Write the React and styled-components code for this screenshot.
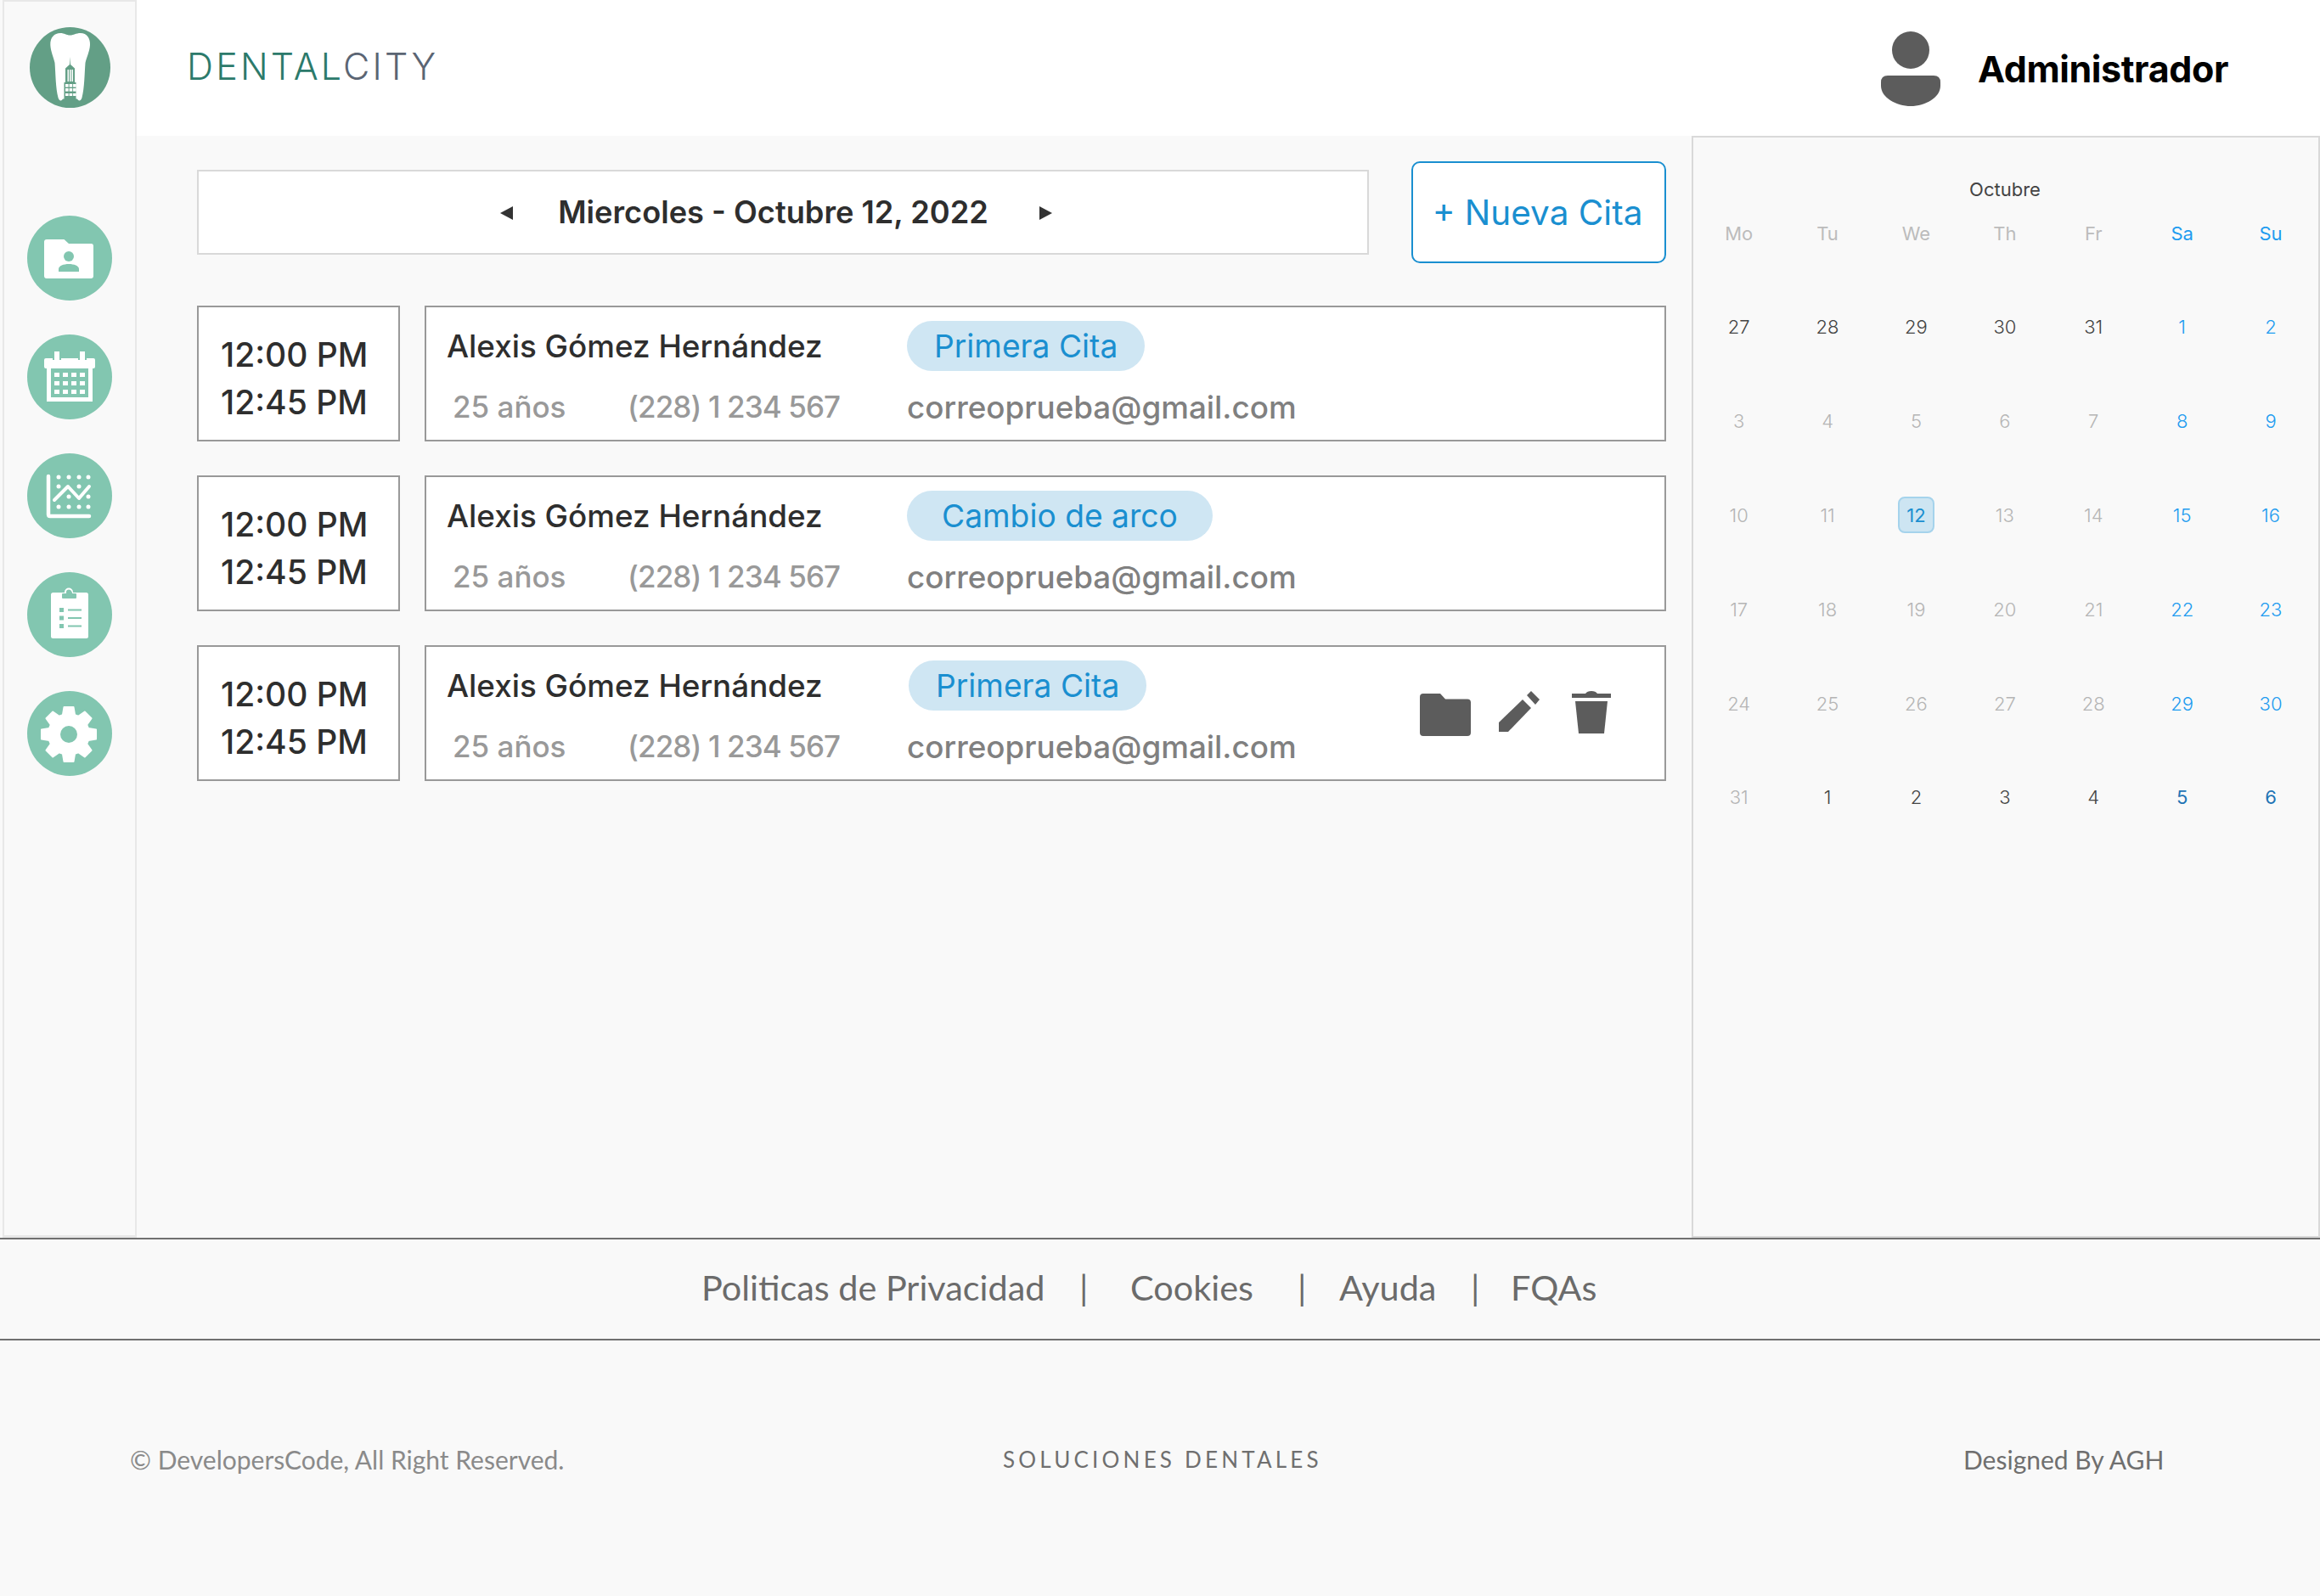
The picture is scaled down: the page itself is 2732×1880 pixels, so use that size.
import React from "react";
import styled, { createGlobalStyle } from "styled-components";

const Global = createGlobalStyle`
  html, body { margin: 0; padding: 0; background: #f9f9f9; }
  * { box-sizing: border-box; }
  #root { width: 2732px; height: 1880px; overflow: hidden; font-family: Inter, "Liberation Sans", sans-serif; }
`;

const Shell = styled.div`
  display: flex;
  height: 1458px;
  padding-left: 3px;
`;
const Sidebar = styled.aside`
  flex: 0 0 158px;
  display: flex;
  flex-direction: column;
  align-items: center;
  padding-top: 30px;
  background: #f9f9f9;
  border: 2px solid #e8e8e8;
  border-bottom-width: 3px;
`;
const LogoMark = styled.svg`
  width: 95px;
  height: 95px;
  display: block;
  margin-bottom: 127px;
`;
const NavList = styled.nav`
  display: flex;
  flex-direction: column;
  gap: 40px;
`;
const NavCircle = styled.svg`
  width: 100px;
  height: 100px;
  display: block;
`;
const Main = styled.div`
  flex: 1;
  display: flex;
  flex-direction: column;
  min-width: 0;
`;
const Header = styled.header`
  height: 160px;
  background: #fff;
  display: flex;
  align-items: center;
  justify-content: space-between;
  padding: 0 108px 4px 59px;
`;
const Brand = styled.div`
  font-weight: 300;
  font-size: 43px;
  letter-spacing: 3.2px;
  color: #2c7a6b;
  span { color: #5b6573; }
`;
const UserBox = styled.div`
  display: flex;
  align-items: center;
  gap: 44px;
  margin-top: 6px;
`;
const UserName = styled.div`
  font-weight: 700;
  font-size: 43px;
  color: #000;
  letter-spacing: -0.4px;
`;
const Content = styled.div`
  flex: 1;
  display: flex;
  min-height: 0;
`;
const Agenda = styled.section`
  flex: 1;
  padding: 30px 30px 0 71px;
  display: flex;
  flex-direction: column;
`;
const Toolbar = styled.div`
  display: flex;
  align-items: center;
  gap: 50px;
  height: 120px;
  margin-bottom: 50px;
`;
const DateBox = styled.div`
  flex: 1;
  height: 100px;
  background: #fff;
  border: 2px solid #d9d9d9;
  display: flex;
  align-items: center;
  justify-content: center;
  padding: 2px 16px 0 0;
`;
const Arrow = styled.i`
  width: 0;
  height: 0;
  border-top: 8px solid transparent;
  border-bottom: 8px solid transparent;
  ${p => (p.$right ? "border-left: 15px solid #333;" : "border-right: 15px solid #333;")}
`;
const DateText = styled.div`
  margin: -2px 60px 0 53px;
  font-size: 36.2px;
  font-weight: 600;
  color: #2e2e2e;
`;
const NewButton = styled.button`
  flex: 0 0 300px;
  height: 120px;
  background: #fff;
  border: 2px solid #1a8fd0;
  border-radius: 10px;
  color: #1a8fd0;
  font: 400 40.5px Inter, sans-serif;
  padding: 0 3px 0 0;
`;
const Rows = styled.div`
  display: flex;
  flex-direction: column;
  gap: 40px;
`;
const Row = styled.article`
  display: flex;
  gap: 29px;
  height: 160px;
`;
const TimeBox = styled.div`
  flex: 0 0 239px;
  background: #fff;
  border: 2px solid #999;
  padding: 28px 0 0 26px;
  font-size: 39px;
  font-weight: 500;
  line-height: 56px;
  color: #2e2e2e;
`;
const Card = styled.div`
  flex: 1;
  background: #fff;
  border: 2px solid #999;
  display: flex;
  align-items: center;
  padding-left: 24px;
`;
const CardGrid = styled.div`
  display: grid;
  grid-template-columns: 542px auto;
  grid-template-rows: 59px 42px;
  row-gap: 21px;
  align-items: center;
  margin-bottom: 2px;
`;
const Name = styled.div`
  font-size: 36.8px;
  font-weight: 500;
  color: #2e2e2e;
`;
const Chip = styled.div`
  justify-self: start;
  height: 59px;
  padding: 0 ${p => p.$pad}px;
  margin-left: ${p => p.$shift}px;
  border-radius: 30px;
  background: #cfe6f3;
  color: #1a8fd0;
  font-size: 37.2px;
  line-height: 59px;
`;
const Meta = styled.div`
  display: flex;
  padding-left: 7px;
  font-size: 35px;
  font-weight: 500;
  color: #999;
`;
const Age = styled.span`
  width: 206px;
`;
const Phone = styled.span`
  letter-spacing: -0.9px;
`;
const Email = styled.div`
  font-size: 36.8px;
  font-weight: 500;
  color: #808080;
`;
const Actions = styled.div`
  margin-left: auto;
  display: flex;
  align-items: flex-start;
  gap: 33px;
  margin-right: 63px;
`;
const ActionIcon = styled.svg`
  display: block;
  fill: #5c5c5c;
  margin: ${p => p.$margin || 0};
`;
const Calendar = styled.aside`
  flex: 0 0 740px;
  background: #f9f9f9;
  border: 2px solid #d9d9d9;
  padding: 35px 0 0 1.5px;
`;
const MonthTitle = styled.div`
  width: 731px;
  height: 52px;
  line-height: 52px;
  text-align: center;
  font-size: 22px;
  color: #444;
`;
const WeekHeader = styled.div`
  display: grid;
  grid-template-columns: repeat(7, 104.4px);
  height: 52px;
  line-height: 52px;
  text-align: center;
  font-size: 22px;
  margin-bottom: 29px;
`;
const WeekDay = styled.div`
  color: ${p => (p.$weekend ? "#1e9cf0" : "#bcbcbc")};
`;
const DaysGrid = styled.div`
  display: grid;
  grid-template-columns: repeat(7, 104.4px);
  grid-auto-rows: 110.8px;
  font-size: 22px;
`;
const Day = styled.div`
  display: flex;
  align-items: center;
  justify-content: center;
  font-weight: ${p => (p.$tone === "navy" ? 400 : 300)};
  color: ${p => ({ dim: "#b5b5b5", dark: "#444", blue: "#1e9cf0", navy: "#1f74b5" }[p.$tone])};
`;
const Today = styled.span`
  width: 43px;
  height: 43px;
  border-radius: 8px;
  background: #cde5f2;
  border: 2px solid #a5d3ec;
  color: #1a8fd0;
  display: flex;
  align-items: center;
  justify-content: center;
  font-weight: 400;
`;
const FooterNav = styled.nav`
  height: 121px;
  border-top: 2px solid #707070;
  border-bottom: 2px solid #707070;
  display: flex;
  align-items: center;
  padding: 0 0 6px 826px;
  font-family: Lato, sans-serif;
  font-size: 41.4px;
  color: #6b6b6b;
`;
const FooterLink = styled.span`
  width: ${p => p.$w}px;
  white-space: nowrap;
`;
const FooterBottom = styled.footer`
  display: grid;
  grid-template-columns: 1028px 1131px auto;
  padding: 116px 0 0 153px;
  align-items: center;
  height: 301px;
  align-content: start;
`;
const Copy = styled.div`
  font-family: Lato, sans-serif;
  font-size: 30px;
  color: #8a8a8a;
  line-height: 48px;
`;
const Slogan = styled.div`
  font-family: Lato, sans-serif;
  font-size: 26px;
  letter-spacing: 4.2px;
  color: #6f6f6f;
  line-height: 46px;
`;
const Credit = styled.div`
  font-family: Lato, sans-serif;
  font-size: 30px;
  color: #6f6f6f;
  line-height: 48px;
`;

const gearPath = (() => {
  const cx = 49, cy = 51, R = 32.5, r = 24;
  const pts = [];
  for (let i = 0; i < 8; i++) {
    const a = (i * Math.PI) / 4 - Math.PI / 2;
    const at = (rad, d) => `${(cx + rad * Math.cos(a + d)).toFixed(2)} ${(cy + rad * Math.sin(a + d)).toFixed(2)}`;
    pts.push(at(r, -0.3), at(R, -0.17), at(R, 0.17), at(r, 0.3));
  }
  return `M${pts.join("L")}Z`;
})();

const Disc = () => <circle cx="50" cy="50" r="50" fill="#82c6b0" />;

const FolderPersonIcon = () => (
  <NavCircle viewBox="0 0 100 100">
    <Disc />
    <path fill="#fff" d="M23 28H43.5L49 33H75.5Q78 33 78 36V71Q78 74 75 74H23Q20 74 20 71V31Q20 28 23 28Z" />
    <circle cx="49" cy="48" r="6" fill="#82c6b0" />
    <path fill="#82c6b0" d="M37 66V63C37 59 43 57 49 57S61 59 61 63V66Z" />
  </NavCircle>
);
const CalendarIcon = () => (
  <NavCircle viewBox="0 0 100 100">
    <Disc />
    <path fill="#fff" d="M22 28H78Q80 28 80 30V38Q80 40 78 40H77V79H23V40H22Q20 40 20 38V30Q20 28 22 28Z" />
    <rect x="28" y="40" width="44" height="34" fill="#82c6b0" />
    <rect x="30" y="20" width="10" height="10" fill="#82c6b0" />
    <rect x="60" y="20" width="10" height="10" fill="#82c6b0" />
    <rect x="32" y="20" width="6" height="10" fill="#fff" />
    <rect x="62" y="20" width="6" height="10" fill="#fff" />
    {[45, 55, 65].map(y => [32, 42, 52, 62].map(x => <rect key={`${x}-${y}`} x={x} y={y} width="6" height="5" fill="#fff" />))}
  </NavCircle>
);
const ChartIcon = () => (
  <NavCircle viewBox="0 0 100 100">
    <Disc />
    <path fill="none" stroke="#fff" strokeWidth="4.5" strokeLinecap="round" strokeLinejoin="round" d="M25 27V72Q25 74 27 74H73" />
    <path fill="none" stroke="#fff" strokeWidth="4" strokeLinecap="round" strokeLinejoin="round" d="M32 55L48 39L61 53L73 39" />
    {[[37, 28], [49, 28], [61, 28], [72, 28], [37, 39], [61, 39], [49, 51], [72, 51], [37, 63], [49, 63], [61, 63], [72, 63]].map(([x, y]) => (
      <circle key={`${x}-${y}`} cx={x} cy={y} r="2.5" fill="#fff" />
    ))}
  </NavCircle>
);
const ClipboardIcon = () => (
  <NavCircle viewBox="0 0 100 100">
    <Disc />
    <rect x="28" y="24" width="44" height="54" rx="2.5" fill="#fff" />
    <circle cx="49" cy="23.5" r="4" fill="none" stroke="#fff" strokeWidth="2" />
    <rect x="41" y="25" width="17" height="6" rx="1" fill="#82c6b0" />
    <path d="M46 25a3.5 3.5 0 0 1 7 0Z" fill="#82c6b0" />
    {[42, 51.5, 61].map(y => <rect key={y} x="38" y={y} width="5" height="5" fill="#82c6b0" />)}
    {[43.5, 53, 62.5].map(y => <rect key={y} x="48" y={y} width="16" height="2" fill="#82c6b0" />)}
  </NavCircle>
);
const GearIcon = () => (
  <NavCircle viewBox="0 0 100 100">
    <Disc />
    <path d={gearPath} fill="#fff" stroke="#fff" strokeWidth="2" strokeLinejoin="round" />
    <circle cx="49" cy="51" r="10" fill="#82c6b0" />
  </NavCircle>
);

const Logo = () => (
  <LogoMark viewBox="0 0 95 95">
    <circle cx="47.5" cy="47.5" r="47.5" fill="#639f86" />
    <path
      fill="#fff"
      d="M24.3 21C24 12 29 7 36 7C41 7 43 9.5 47.5 9.5S54 7 60 7C67 7 71.5 13 71 21C70.5 29 67 35 65.5 42C64.5 55 64.5 72 61.5 83C60.5 87 57.5 87.5 56 84.5H39C37.5 87.5 34.5 87 33.5 83C30.5 72 30.5 55 29.5 42C28 35 24.8 29 24.3 21Z"
    />
    <path fill="#639f86" d="M47.5 35L48 44L53 48.5V65H54.5V85H40.5V65H42V48.5L47 44Z" />
    {[44.5, 47, 49.5].map(x => <rect key={x} x={x} y="50" width="1.5" height="14" fill="#fff" />)}
    {[67, 72, 78].map((y, i) => [42, 46.6, 51.1].map(x => <rect key={`${x}-${y}`} x={x} y={y} width="3.6" height={i === 2 ? 3 : 3.6} fill="#fff" />))}
  </LogoMark>
);

const PersonIcon = () => (
  <svg width="70" height="88" viewBox="0 0 70 88" style={{ display: "block" }}>
    <ellipse cx="35" cy="22" rx="22" ry="22" fill="#5c5c5c" />
    <path fill="#5c5c5c" d="M8 52H62Q70 52 70 60V64C70 78 52 88 35 88S0 78 0 64V60Q0 52 8 52Z" />
  </svg>
);

const FolderAction = () => (
  <ActionIcon width="60" height="50" viewBox="0 0 60 50" $margin="3px 0 0">
    <path d="M4 0H24L30 6.5H56Q60 6.5 60 10.5V46Q60 50 56 50H4Q0 50 0 46V4Q0 0 4 0Z" />
  </ActionIcon>
);
const PenAction = () => (
  <ActionIcon width="48" height="48" viewBox="0 0 48 48">
    <path d="M0 37L28 10L38 20L11 48H0Z" />
    <path d="M33 5L38 0L48 10L43 16Z" />
  </ActionIcon>
);
const TrashAction = () => (
  <ActionIcon width="46" height="50" viewBox="0 0 46 50" $margin="0 0 0 5px">
    <path d="M0 3H16Q18 0 23 0T30 3H46V8H0Z" />
    <path d="M4 12H42L38 50H8Z" />
  </ActionIcon>
);

const appointments = [
  { chip: "Primera Cita", pad: 32, shift: 0 },
  { chip: "Cambio de arco", pad: 41, shift: 0 },
  { chip: "Primera Cita", pad: 32, shift: 2, actions: true },
];

const weekDays = ["Mo", "Tu", "We", "Th", "Fr", "Sa", "Su"];
const days = [
  ...[27, 28, 29, 30, 31].map(n => [n, "dark"]), [1, "blue"], [2, "blue"],
  ...[3, 4, 5, 6, 7].map(n => [n, "dim"]), [8, "blue"], [9, "blue"],
  ...[10, 11, 12, 13, 14].map(n => [n, "dim"]), [15, "blue"], [16, "blue"],
  ...[17, 18, 19, 20, 21].map(n => [n, "dim"]), [22, "blue"], [23, "blue"],
  ...[24, 25, 26, 27, 28].map(n => [n, "dim"]), [29, "blue"], [30, "blue"],
  [31, "dim"], ...[1, 2, 3, 4].map(n => [n, "dark"]), [5, "navy"], [6, "navy"],
];

export default function App() {
  return (
    <>
      <Global />
      <Shell>
        <Sidebar>
          <Logo />
          <NavList>
            <FolderPersonIcon />
            <CalendarIcon />
            <ChartIcon />
            <ClipboardIcon />
            <GearIcon />
          </NavList>
        </Sidebar>
        <Main>
          <Header>
            <Brand>DENTAL<span>CITY</span></Brand>
            <UserBox>
              <PersonIcon />
              <UserName>Administrador</UserName>
            </UserBox>
          </Header>
          <Content>
            <Agenda>
              <Toolbar>
                <DateBox>
                  <Arrow />
                  <DateText>Miercoles - Octubre 12, 2022</DateText>
                  <Arrow $right />
                </DateBox>
                <NewButton>+ Nueva Cita</NewButton>
              </Toolbar>
              <Rows>
                {appointments.map((a, i) => (
                  <Row key={i}>
                    <TimeBox>
                      <div>12:00 PM</div>
                      <div>12:45 PM</div>
                    </TimeBox>
                    <Card>
                      <CardGrid>
                        <Name>Alexis Gómez Hernández</Name>
                        <Chip $pad={a.pad} $shift={a.shift}>{a.chip}</Chip>
                        <Meta>
                          <Age>25 años</Age>
                          <Phone>(228) 1 234 567</Phone>
                        </Meta>
                        <Email>correoprueba@gmail.com</Email>
                      </CardGrid>
                      {a.actions && (
                        <Actions>
                          <FolderAction />
                          <PenAction />
                          <TrashAction />
                        </Actions>
                      )}
                    </Card>
                  </Row>
                ))}
              </Rows>
            </Agenda>
            <Calendar>
              <MonthTitle>Octubre</MonthTitle>
              <WeekHeader>
                {weekDays.map((d, i) => <WeekDay key={d} $weekend={i > 4}>{d}</WeekDay>)}
              </WeekHeader>
              <DaysGrid>
                {days.map(([n, tone], i) => (
                  <Day key={i} $tone={tone}>{n === 12 ? <Today>12</Today> : n}</Day>
                ))}
              </DaysGrid>
            </Calendar>
          </Content>
        </Main>
      </Shell>
      <FooterNav>
        <FooterLink $w={445}>Politicas de Privacidad</FooterLink>
        <FooterLink $w={60}>|</FooterLink>
        <FooterLink $w={197}>Cookies</FooterLink>
        <FooterLink $w={49}>|</FooterLink>
        <FooterLink $w={155}>Ayuda</FooterLink>
        <FooterLink $w={47}>|</FooterLink>
        <FooterLink $w={120}>FQAs</FooterLink>
      </FooterNav>
      <FooterBottom>
        <Copy>© DevelopersCode, All Right Reserved.</Copy>
        <Slogan>SOLUCIONES DENTALES</Slogan>
        <Credit>Designed By AGH</Credit>
      </FooterBottom>
    </>
  );
}
